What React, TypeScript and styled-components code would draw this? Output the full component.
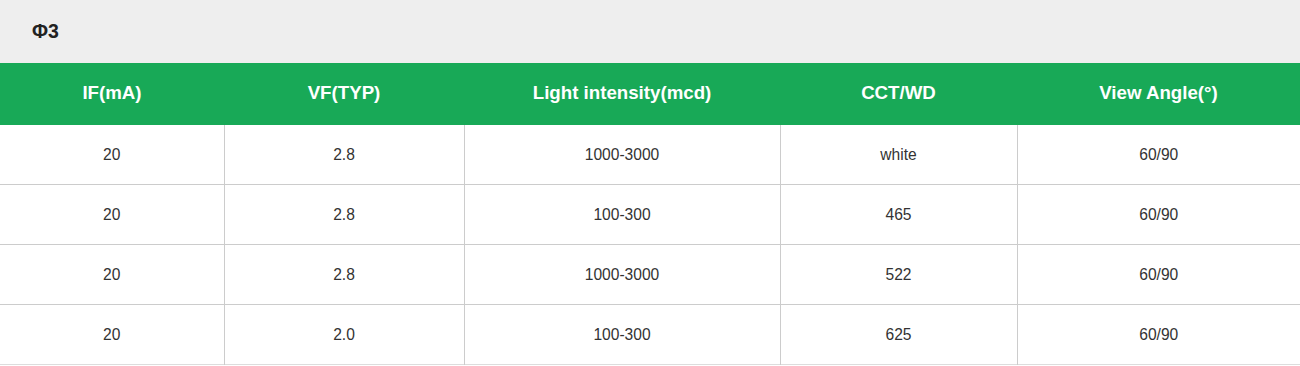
import React from "react";
import styled, { createGlobalStyle } from "styled-components";

const GlobalStyle = createGlobalStyle`
  html, body {
    margin: 0;
    padding: 0;
    background: #ffffff;
    font-family: "Liberation Sans", Arial, sans-serif;
  }
`;

const Wrapper = styled.div`
  width: 1300px;
`;

const TitleBar = styled.div`
  height: 63px;
  background: #eeeeee;
  display: flex;
  align-items: center;
  padding-left: 32px;
  box-sizing: border-box;
  font-size: 19.5px;
  font-weight: bold;
  color: #222;
`;

const Table = styled.table`
  width: 1300px;
  border-collapse: collapse;
  table-layout: fixed;
`;

const HeadCell = styled.th`
  height: 60px;
  padding: 0 0 2px;
  background: #18a957;
  color: #ffffff;
  font-size: 18.7px;
  font-weight: bold;
  text-align: center;
`;

const Row = styled.tr<{ $last?: boolean }>`
  border-bottom: 1px solid ${(p) => (p.$last ? "#dddddd" : "#cccccc")};
`;

const Cell = styled.td`
  height: 59px;
  padding: 0;
  text-align: center;
  font-size: 15.6px;
  color: #333333;
  border-left: 1px solid #cccccc;

  &:first-child {
    border-left: none;
  }
`;

const columns = [
  { title: "IF(mA)", width: 224 },
  { title: "VF(TYP)", width: 240 },
  { title: "Light intensity(mcd)", width: 316 },
  { title: "CCT/WD", width: 237 },
  { title: "View Angle(°)", width: 283 },
];

const rows = [
  ["20", "2.8", "1000-3000", "white", "60/90"],
  ["20", "2.8", "100-300", "465", "60/90"],
  ["20", "2.8", "1000-3000", "522", "60/90"],
  ["20", "2.0", "100-300", "625", "60/90"],
];

const App = (): JSX.Element => {
  return (
    <>
      <GlobalStyle />
      <Wrapper>
        <TitleBar>Φ3</TitleBar>
        <Table>
          <colgroup>
            {columns.map((c) => (
              <col key={c.title} style={{ width: c.width }} />
            ))}
          </colgroup>
          <thead>
            <tr>
              {columns.map((c) => (
                <HeadCell key={c.title}>{c.title}</HeadCell>
              ))}
            </tr>
          </thead>
          <tbody>
            {rows.map((r, i) => (
              <Row key={i} $last={i === rows.length - 1}>
                {r.map((v, j) => (
                  <Cell key={j}>{v}</Cell>
                ))}
              </Row>
            ))}
          </tbody>
        </Table>
      </Wrapper>
    </>
  );
};

export default App;
